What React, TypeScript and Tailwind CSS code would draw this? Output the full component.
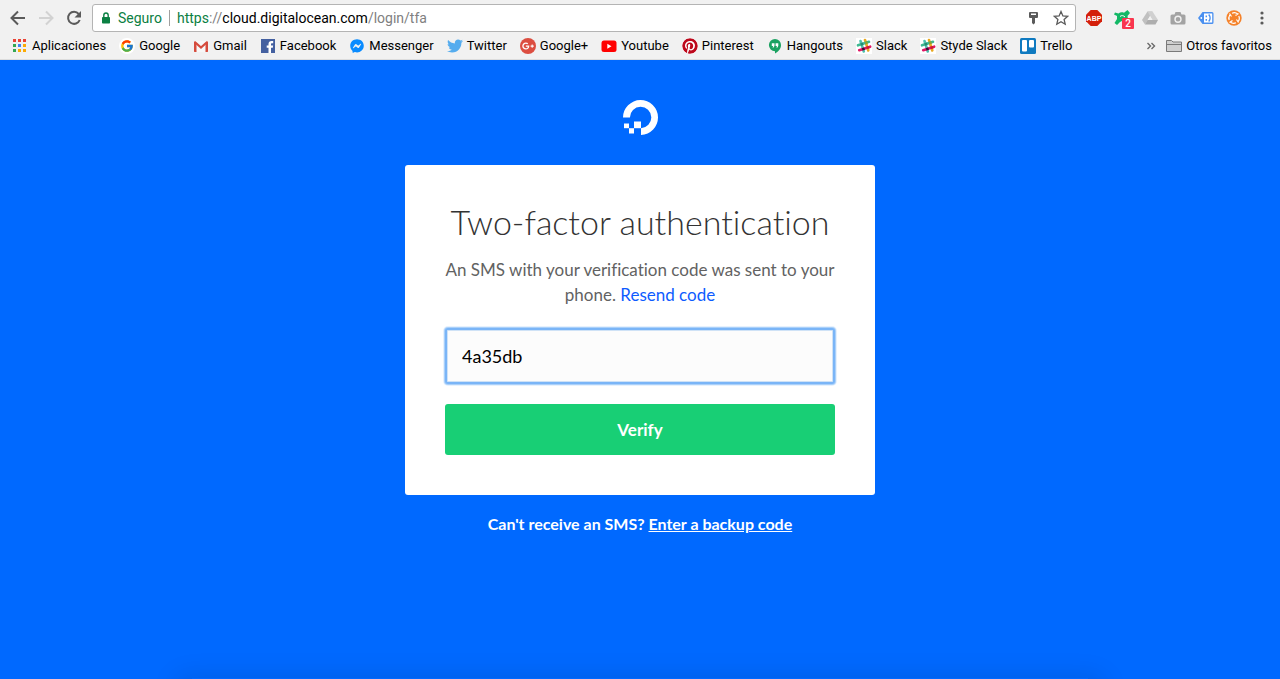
import React, { useState } from "react";
import { FcGoogle } from "react-icons/fc";
import {
  FaFacebookMessenger,
  FaGooglePlusG,
  FaPinterest,
  FaTwitter,
} from "react-icons/fa";

interface Bookmark {
  label: string;
  icon: React.ReactNode;
}

const AppsIcon = () => {
  const colors = [
    "#ea4335", "#ea4335", "#ea4335",
    "#34a853", "#4285f4", "#fbab05",
    "#34a853", "#fbab05", "#fbab05",
  ];
  return (
    <svg viewBox="0 0 16 16" className="size-4">
      {colors.map((color, i) => (
        <rect
          key={i}
          x={1 + (i % 3) * 5}
          y={1 + Math.floor(i / 3) * 5}
          width="3"
          height="3"
          fill={color}
        />
      ))}
    </svg>
  );
};

const GmailIcon = () => (
  <svg viewBox="0 0 16 16" className="size-4">
    <rect x="1" y="3" width="14" height="11" rx="1" fill="#f7f7f7" />
    <path d="M1 13.500V3.500h1.500L3.500 6v8H1.500zM15 13.500V3.500h-1.500L12.500 6v8h2z" fill="#d54b3d" />
    <path d="M1.800 4L8 9.500 14.200 4" fill="none" stroke="#d54b3d" strokeWidth="2.200" />
  </svg>
);

const FacebookIcon = () => (
  <svg viewBox="0 0 16 16" className="size-4">
    <rect x="1" y="1" width="14" height="14" fill="#4460a0" />
    <path
      d="M8.500 15V9.800H6.700V7.400H8.500V6C8.500 4 9.700 3 11.500 3l1.700.1v2.200h-1.100c-.9 0-1.100.4-1.100 1v1.100h2.100L12.800 9.800H11V15z"
      fill="#fff"
    />
  </svg>
);

const GooglePlusIcon = () => (
  <span className="flex size-4 items-center justify-center rounded-full bg-[#dc4e41] text-white">
    <FaGooglePlusG className="size-3" />
  </span>
);

const YoutubeIcon = () => (
  <svg viewBox="0 0 16 16" className="size-4">
    <rect x="0.500" y="2.500" width="15" height="11.500" rx="2.500" fill="#f00" />
    <path d="M6.300 5.800v5l4.200-2.500z" fill="#fff" />
  </svg>
);

const HangoutsIcon = () => (
  <svg viewBox="0 0 16 16" className="size-4">
    <path d="M8 1a6 6 0 0 0 0 12.200V15.500c3.300-1.600 6-4.600 6-8.400A6 6 0 0 0 8 1z" fill="#1ba261" />
    <path
      d="M4.800 5.200h2.700v2.600L6.700 9.400H5.500l.7-1.500H4.800zM8.600 5.200h2.700v2.600l-.8 1.600H9.300l.7-1.500H8.600z"
      fill="#fff"
    />
  </svg>
);

const SlackIcon = () => (
  <svg viewBox="0 0 16 16" className="size-4">
    <rect width="16" height="16" fill="#fff" />
    <g fill="none" strokeWidth="2.600" strokeLinecap="round">
      <path d="M4.500 3l3.300 10.500" stroke="#4fc0b0" />
      <path d="M9 2l3.300 10.500" stroke="#e9a820" />
      <path d="M2 7.300L13 3.800" stroke="#3eb891" />
      <path d="M3.200 12.200l11-3.500" stroke="#e01563" />
    </g>
    <path d="M4.300 5.400l2.400-.8.800 2.400-2.400.7z" fill="#258b74" />
    <path d="M8.800 4l2.400-.8.800 2.400-2.400.7z" fill="#93a02c" />
    <path d="M5.800 10.200l2.400-.8.800 2.400-2.400.7z" fill="#331433" />
    <path d="M10.300 8.700l2.400-.8.800 2.400-2.400.7z" fill="#cc2027" />
  </svg>
);

const TrelloIcon = () => (
  <svg viewBox="0 0 16 16" className="size-4">
    <rect width="16" height="16" rx="1.500" fill="#0f7ac0" />
    <rect x="2" y="2" width="5" height="11.500" rx="1" fill="#fff" />
    <rect x="9" y="2" width="5" height="7.500" rx="1" fill="#fff" />
  </svg>
);

const bookmarks: Bookmark[] = [
  { label: "Aplicaciones", icon: <AppsIcon /> },
  { label: "Google", icon: <FcGoogle className="size-4 rounded-full bg-white p-px" /> },
  { label: "Gmail", icon: <GmailIcon /> },
  { label: "Facebook", icon: <FacebookIcon /> },
  { label: "Messenger", icon: <FaFacebookMessenger className="size-4 p-px text-[#0a8cff]" /> },
  { label: "Twitter", icon: <FaTwitter className="size-4 text-[#55acee]" /> },
  { label: "Google+", icon: <GooglePlusIcon /> },
  { label: "Youtube", icon: <YoutubeIcon /> },
  { label: "Pinterest", icon: <FaPinterest className="size-4 rounded-full bg-white text-[#bd081c]" /> },
  { label: "Hangouts", icon: <HangoutsIcon /> },
  { label: "Slack", icon: <SlackIcon /> },
  { label: "Styde Slack", icon: <SlackIcon /> },
  { label: "Trello", icon: <TrelloIcon /> },
];

const NavButtons = () => (
  <div className="flex gap-3">
    <button type="button" aria-label="Atrás" className="text-[#5a5a5a]">
      <svg viewBox="0 0 16 16" className="size-4" fill="none" stroke="currentColor" strokeWidth="2">
        <path d="M15 8H2M8 1.500L1.500 8 8 14.500" />
      </svg>
    </button>
    <button type="button" aria-label="Adelante" className="text-[#d2d2d2]">
      <svg viewBox="0 0 16 16" className="size-4" fill="none" stroke="currentColor" strokeWidth="2">
        <path d="M1 8h13M8 1.500L14.500 8 8 14.500" />
      </svg>
    </button>
    <button type="button" aria-label="Recargar" className="text-[#5a5a5a]">
      <svg viewBox="0 0 16 16" className="size-4" fill="none" stroke="currentColor" strokeWidth="2">
        <path d="M12.700 4A6 6 0 1 0 13.700 10" />
        <path d="M15 1v6.500H8.500z" fill="currentColor" stroke="none" />
      </svg>
    </button>
  </div>
);

const AddressBar = () => (
  <div className="flex h-7 flex-1 items-center rounded-[3px] border border-[#b4b4b4] bg-white px-2 text-sm leading-5">
    <svg viewBox="0 0 10 12" className="h-3 w-[10px] text-[#0b8043]">
      <rect x="1" y="5" width="8" height="6.500" rx="0.800" fill="currentColor" />
      <path d="M2.800 5.500V3.200a2.200 2.200 0 0 1 4.400 0v2.300" fill="none" stroke="currentColor" strokeWidth="1.400" />
    </svg>
    <span className="ml-[7px] text-[#0b8043]">Seguro</span>
    <span className="mx-[7px] h-4 w-px bg-[#a0a0a0]" />
    <span className="flex-1 text-[#808080]">
      <span className="text-[#0b8043]">https</span>://
      <span className="text-black">cloud.digitalocean.com</span>/login/tfa
    </span>
    <button type="button" aria-label="Contraseñas" className="mr-3 text-[#5a5a5a]">
      <svg viewBox="0 0 16 16" className="size-4" fill="currentColor">
        <path fillRule="evenodd" d="M5 2h7a1 1 0 0 1 1 1v4a1 1 0 0 1-1 1h-2v5l-1.500 1.500L7 13V8H5a1 1 0 0 1-1-1V3a1 1 0 0 1 1-1zm1 1.500V5h5V3.500z" />
      </svg>
    </button>
    <button type="button" aria-label="Añadir a favoritos" className="-mr-[2px] text-[#5a5a5a]">
      <svg viewBox="0 0 16 16" className="size-4" fill="none" stroke="currentColor" strokeWidth="1.300">
        <path d="M8 1.500l1.900 4.400 4.800.4-3.600 3.200 1.100 4.700L8 11.700l-4.200 2.500 1.100-4.700L1.300 6.300l4.800-.4z" />
      </svg>
    </button>
  </div>
);

const Extensions = () => (
  <div className="flex items-center gap-3">
    <button type="button" aria-label="Adblock Plus">
      <svg viewBox="0 0 16 16" className="size-4">
        <path d="M4.700 0h6.600L16 4.700v6.600L11.300 16H4.700L0 11.300V4.700z" fill="#d41f0a" />
        <text
          x="8"
          y="11"
          textAnchor="middle"
          fontSize="7"
          fontWeight="700"
          fill="#fff"
          fontFamily="Liberation Sans, sans-serif"
        >
          ABP
        </text>
      </svg>
    </button>
    <button type="button" aria-label="Notificaciones" className="relative">
      <svg viewBox="0 0 16 16" className="size-4" fill="#13b866">
        <path d="M1 2.500l3.500 1C6 2.300 8 2 10 2.800L13.500 0 16 3l-2.500 3 .5 3-5 1.500-3 1.500L3 15 .5 13 3 9V6L0 4.500z" />
        <path d="M6 6.500c1.500-1.500 3.500-1 5 .5" fill="none" stroke="#fff" />
      </svg>
      <span className="absolute top-2 left-2 h-[11px] w-3 rounded-[1px] bg-[#f9364f] text-center text-[10px] leading-[11px] font-medium text-white">
        2
      </span>
    </button>
    <button type="button" aria-label="Google Drive">
      <svg viewBox="0 0 16 16" className="size-4">
        <path d="M5.500 1.500h5L8 6 3 14.500 0 10z" fill="#c0c0c0" />
        <path d="M5.500 1.500h5L16 10h-5.500z" fill="#d0d0d0" />
        <path d="M5.500 10H16l-2.500 4.500H3z" fill="#aeaeae" />
        <path d="M8 6.200l2.300 3.800H5.700z" fill="#f1f1f1" />
      </svg>
    </button>
    <button type="button" aria-label="Captura de pantalla">
      <svg viewBox="0 0 16 16" className="size-4">
        <path d="M5.500 2h5l1 2.500H14A1.500 1.500 0 0 1 15.500 6v7a1.500 1.500 0 0 1-1.500 1.500H2A1.500 1.500 0 0 1 .5 13V6A1.500 1.500 0 0 1 2 4.500h2.500z" fill="#a3a3a3" />
        <circle cx="8" cy="9.300" r="3" fill="none" stroke="#f1f1f1" strokeWidth="1.400" />
      </svg>
    </button>
    <button type="button" aria-label="Etiquetas">
      <svg viewBox="0 0 16 16" className="size-4">
        <path d="M4.500 2H14a1.500 1.500 0 0 1 1.500 1.500v9A1.500 1.500 0 0 1 14 14H4.500L0 8z" fill="#4a90f0" />
        <rect x="6" y="3.500" width="8.200" height="9" fill="#fff" />
        <path d="M8.300 5.500v1.700M8.300 9v1.700M10.700 4.500c1.800 2 1.800 5 0 7" fill="none" stroke="#4a90f0" strokeWidth="1.500" />
        <circle cx="3.300" cy="8" r="0.900" fill="#fff" />
      </svg>
    </button>
    <button type="button" aria-label="Ayuda">
      <svg viewBox="0 0 16 16" className="size-4">
        <circle cx="8" cy="8" r="7.700" fill="#f5822a" />
        <path
          d="M3.500 3.500l2 3M6 3.200c2-.9 4.400-.4 5.800 1M12.500 3.500l-3 2M12.800 6c.9 2 .4 4.400-1 5.800M12.500 12.500l-2-3M10 12.800c-2 .9-4.400.4-5.800-1M3.500 12.500l3-2M3.200 10c-.9-2-.4-3.500.6-5"
          fill="none"
          stroke="#fff"
          strokeWidth="1.200"
        />
      </svg>
    </button>
    <button type="button" aria-label="Menú">
      <svg viewBox="0 0 16 16" className="size-4" fill="#5a5a5a">
        <circle cx="8" cy="3" r="1.600" />
        <circle cx="8" cy="8" r="1.600" />
        <circle cx="8" cy="13" r="1.600" />
      </svg>
    </button>
  </div>
);

const BookmarksBar = () => (
  <nav className="flex h-5 items-center pr-2 pl-3 text-[13px] leading-5 text-black">
    <div className="flex flex-1 gap-[13px]">
      {bookmarks.map((bookmark) => (
        <a key={bookmark.label} href="#" className="flex items-center gap-1 whitespace-nowrap">
          {bookmark.icon}
          {bookmark.label}
        </a>
      ))}
    </div>
    <button type="button" aria-label="Más favoritos" className="mr-[10px]">
      <svg viewBox="0 0 10 10" className="size-[10px]" fill="none" stroke="#6a6a6a" strokeWidth="1.400">
        <path d="M1.500 2l3 3-3 3M5.500 2l3 3-3 3" />
      </svg>
    </button>
    <a href="#" className="flex items-center gap-1 whitespace-nowrap">
      <svg viewBox="0 0 16 16" className="size-4" fill="#d0d0d0" stroke="#7a7a7a">
        <path d="M.5 13.500V2.500h5L7 4h8.500v9.500z" />
        <path d="M.5 6.500h15" />
      </svg>
      Otros favoritos
    </a>
  </nav>
);

const Logo = () => (
  <svg viewBox="0 0 35 35" className="size-[35px]" fill="#fff">
    <path d="M18 35v-6.800A10.700 10.700 0 1 0 6.900 17.500H0A17.500 17.500 0 1 1 18 35z" />
    <rect x="11" y="21.500" width="7" height="6.700" />
    <rect x="6" y="28.200" width="5" height="5.300" />
    <rect x="1" y="23.500" width="5" height="4.700" />
  </svg>
);

const App: React.FC = () => {
  const [code, setCode] = useState("4a35db");

  return (
    <div className="flex min-h-screen flex-col font-['Roboto',sans-serif]">
      <header className="border-b border-[#dcdcdc] bg-[#f1f1f1] pb-[3px]">
        <div className="flex h-9 items-center gap-[10px] px-[10px]">
          <NavButtons />
          <AddressBar />
          <Extensions />
        </div>
        <BookmarksBar />
      </header>

      <main className="flex flex-1 flex-col items-center overflow-hidden bg-[#0069ff] pt-10 font-['Lato',sans-serif] [font-variant-ligatures:none]">
        <Logo />

        <form
          onSubmit={(e) => e.preventDefault()}
          className="mt-[30px] w-full max-w-[470px] rounded-[3px] bg-white p-10 text-center"
        >
          <h1 className="text-[34px] leading-[34px] font-light text-[#333]">
            Two-factor authentication
          </h1>
          <p className="mt-[18px] text-[17px] leading-[25px] text-[#626262]">
            An SMS with your verification code was sent to your
            <br />
            phone.{" "}
            <a href="#" className="text-[#0d5bff]">
              Resend code
            </a>
          </p>
          <input
            type="text"
            aria-label="Verification code"
            value={code}
            onChange={(e) => setCode(e.target.value)}
            className="mt-[21px] block h-14 w-full rounded-[3px] border-2 border-[#7ab5f7] bg-[#fcfcfc] px-[15px] text-lg text-black shadow-[0_0_0_1px_#a9d0fa,0_0_0_2px_#e6f1fd,inset_0_0_0_1px_#cfe2f6] outline-none"
          />
          <button
            type="submit"
            className="mt-5 block h-[51px] w-full rounded-[3px] bg-[#18cf75] text-[17px] font-bold text-white"
          >
            Verify
          </button>
        </form>

        <p className="mt-[19px] text-base leading-5 font-bold text-white">
          Can't receive an SMS?{" "}
          <a href="#" className="underline">
            Enter a backup code
          </a>
        </p>

        <div className="mt-auto h-px w-[70%] shadow-[0_14px_28px_14px_rgba(0,0,0,0.12)]" />
      </main>
    </div>
  );
};

export default App;
